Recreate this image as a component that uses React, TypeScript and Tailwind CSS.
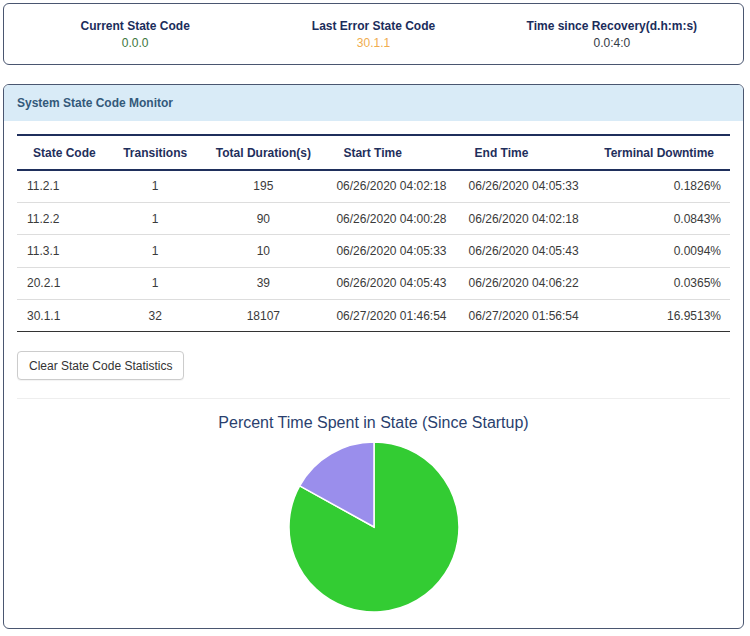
import React from 'react';

type Row = {
  code: string;
  transitions: number;
  duration: number;
  start: string;
  end: string;
  downtime: string;
};

const rows: Row[] = [
  { code: '11.2.1', transitions: 1, duration: 195, start: '06/26/2020 04:02:18', end: '06/26/2020 04:05:33', downtime: '0.1826%' },
  { code: '11.2.2', transitions: 1, duration: 90, start: '06/26/2020 04:00:28', end: '06/26/2020 04:02:18', downtime: '0.0843%' },
  { code: '11.3.1', transitions: 1, duration: 10, start: '06/26/2020 04:05:33', end: '06/26/2020 04:05:43', downtime: '0.0094%' },
  { code: '20.2.1', transitions: 1, duration: 39, start: '06/26/2020 04:05:43', end: '06/26/2020 04:06:22', downtime: '0.0365%' },
  { code: '30.1.1', transitions: 32, duration: 18107, start: '06/27/2020 01:46:54', end: '06/27/2020 01:56:54', downtime: '16.9513%' },
];

// pie geometry: the purple slice sweeps counter-clockwise from 12 o'clock
const R = 85;
const C = 86;
const purpleDeg = 61;
const rad = (purpleDeg * Math.PI) / 180;
const px = C - R * Math.sin(rad);
const py = C - R * Math.cos(rad);

const StatusCard: React.FC = () => (
  <div className="rounded-[6px] border border-[#4a5670] bg-white px-[12px] pt-[14px] pb-[12px]">
    <div className="grid grid-cols-3 text-center text-[12px]">
      <div>
        <div className="font-bold leading-[16px] text-[#1b2d5b]">Current State Code</div>
        <div className="leading-[18px] text-[#3c763d]">0.0.0</div>
      </div>
      <div>
        <div className="font-bold leading-[16px] text-[#1b2d5b]">Last Error State Code</div>
        <div className="leading-[18px] text-[#f0ad4e]">30.1.1</div>
      </div>
      <div>
        <div className="font-bold leading-[16px] text-[#1b2d5b]">Time since Recovery(d.h:m:s)</div>
        <div className="leading-[18px] text-[#333a45]">0.0:4:0</div>
      </div>
    </div>
  </div>
);

const PieChart: React.FC = () => (
  <svg width={172} height={172} viewBox="0 0 172 172" className="mx-auto mt-[9px] block">
    <path
      d={`M${C},${C} L${px},${py} A${R},${R} 0 1 0 ${C},${C - R} Z`}
      fill="#33cc33"
      stroke="#ffffff"
      strokeWidth={1.5}
    />
    <path
      d={`M${C},${C} L${C},${C - R} A${R},${R} 0 0 0 ${px},${py} Z`}
      fill="#9a8eec"
      stroke="#ffffff"
      strokeWidth={1.5}
    />
  </svg>
);

const App: React.FC = () => {
  return (
    <div className="min-h-screen bg-white pt-[3px] pl-[3px] pr-[6px] font-['Liberation_Sans',Arial,sans-serif]">
      <StatusCard />

      {/* System State Code Monitor */}
      <div className="mt-[19px] overflow-hidden rounded-[6px] border border-[#4a5670] bg-white">
        <div className="flex h-[36px] items-center bg-[#d9ebf7] px-[13px] text-[12px] font-bold text-[#33597a]">
          System State Code Monitor
        </div>

        <div className="px-[13px] pt-[13px] pb-[15px]">
          <table className="w-full table-fixed border-collapse text-[12px]">
            <colgroup>
              <col className="w-[93px]" />
              <col className="w-[90px]" />
              <col className="w-[126px]" />
              <col className="w-[132px]" />
              <col className="w-[132px]" />
              <col className="w-[139px]" />
            </colgroup>
            <thead>
              <tr className="h-[35px] border-y-2 border-[#1f2f5c] font-bold text-[#1f2f5c]">
                <th className="pl-[16px] text-left">State Code</th>
                <th className="text-center">Transitions</th>
                <th className="text-center">Total Duration(s)</th>
                <th className="pl-[17px] text-left">Start Time</th>
                <th className="pl-[16px] text-left">End Time</th>
                <th className="pr-[16px] text-right">Terminal Downtime</th>
              </tr>
            </thead>
            <tbody className="text-[#3a3a3a]">
              {rows.map((r, i) => (
                <tr
                  key={r.code}
                  className={`h-[32.4px] border-b ${i === rows.length - 1 ? 'border-[#333333]' : 'border-[#dddddd]'}`}
                >
                  <td className="pl-[10px] text-left">{r.code}</td>
                  <td className="text-center">{r.transitions}</td>
                  <td className="text-center">{r.duration}</td>
                  <td className="pl-[10px] text-left">{r.start}</td>
                  <td className="pl-[10px] text-left">{r.end}</td>
                  <td className="pr-[9px] text-right">{r.downtime}</td>
                </tr>
              ))}
            </tbody>
          </table>

          <button className="mt-[19px] h-[29px] rounded-[4px] border border-[#cccccc] bg-white px-[11px] text-[12px] text-[#333333] shadow-[0_1px_1px_rgba(0,0,0,0.05)]">
            Clear State Code Statistics
          </button>

          <div className="mt-[18px] border-t border-[#eeeeee]" />

          <div className="mt-[15px] text-center text-[16px] leading-[18px] text-[#2a3f6e]">
            Percent Time Spent in State (Since Startup)
          </div>
          <PieChart />
        </div>
      </div>
    </div>
  );
};

export default App;
